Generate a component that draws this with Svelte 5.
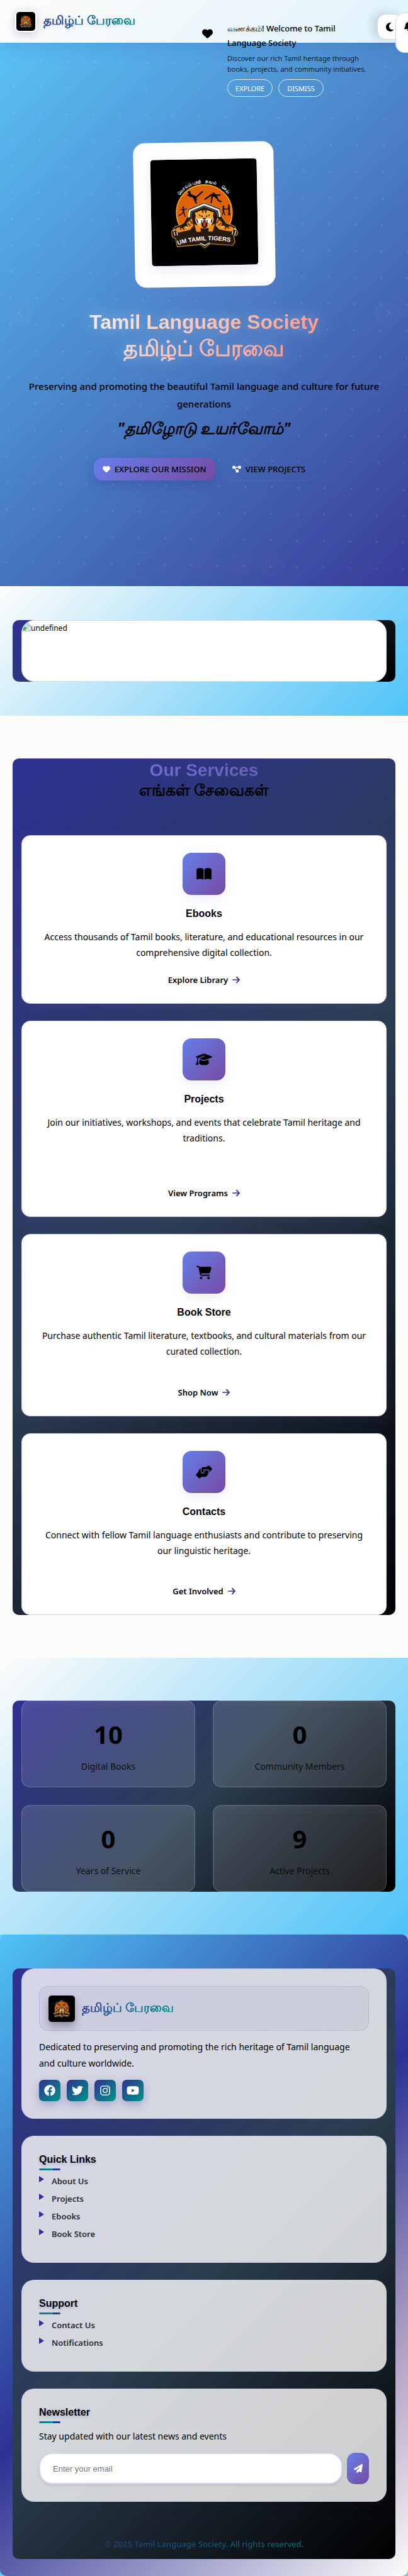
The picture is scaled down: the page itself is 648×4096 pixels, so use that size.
<script>
  const icons = {
    heart: { w: 512, d: 'M47.6 300.4L228.3 469.1c7.5 7 17.4 10.9 27.7 10.9s20.2-3.9 27.7-10.9L464.4 300.4c30.4-28.3 47.6-68 47.6-109.5v-5.8c0-69.9-50.5-129.5-119.4-141C347 36.5 300.6 51.4 268 84L256 96 244 84c-32.6-32.6-79-47.5-124.6-39.9C50.5 55.6 0 115.2 0 185.1v5.8c0 41.5 17.2 81.2 47.6 109.5z' },
    diagram: { w: 576, d: 'M0 80C0 53.5 21.5 32 48 32h96c26.5 0 48 21.5 48 48V96H384V80c0-26.5 21.5-48 48-48h96c26.5 0 48 21.5 48 48v96c0 26.5-21.5 48-48 48H432c-26.5 0-48-21.5-48-48V160H192v16c0 1.7-.1 3.4-.3 5L272 288h96c26.5 0 48 21.5 48 48v96c0 26.5-21.5 48-48 48H272c-26.5 0-48-21.5-48-48V336c0-1.7 .1-3.4 .3-5L144 224H48c-26.5 0-48-21.5-48-48V80z' },
    book: { w: 576, d: 'M249.6 471.5c10.8 3.8 22.4-4.1 22.4-15.5V78.6c0-4.2-1.6-8.4-5-11C247.4 52 202.4 32 144 32C93.5 32 46.3 45.3 18.1 56.1C6.8 60.5 0 71.7 0 83.8V454.1c0 11.9 12.8 20.2 24.1 16.5C55.6 460.1 105.5 448 144 448c33.9 0 79 14 105.6 23.5zm76.8 0C353 462 398.1 448 432 448c38.5 0 88.4 12.1 119.9 22.6c11.3 3.8 24.1-4.6 24.1-16.5V83.8c0-12.1-6.8-23.3-18.1-27.6C529.7 45.3 482.5 32 432 32c-58.4 0-103.4 20-123 35.6c-3.3 2.6-5 6.8-5 11V456c0 11.4 11.7 19.3 22.4 15.5z' },
    cap: { w: 640, d: 'M320 32c-8.1 0-16.1 1.4-23.7 4.1L15.8 137.4C6.3 140.9 0 149.9 0 160s6.3 19.1 15.8 22.6l57.9 20.9C57.3 229.3 48 259.8 48 291.9v28.1c0 28.4-10.8 57.7-22.3 80.8c-6.5 13-13.9 25.8-22.5 37.6C0 442.7-.9 448.3 .9 453.4s6 8.9 11.2 10.2l64 16c4.2 1.1 8.7 .3 12.4-2s6.3-6.1 7.1-10.4c8.6-42.8 4.3-81.2-2.1-108.7C90.3 344.3 86 329.8 80 316.5V291.9c0-30.2 10.2-58.7 27.9-81.5c12.9-15.5 29.6-28 49.2-35.7l157-61.7c8.2-3.2 17.5 .8 20.7 9s-.8 17.5-9 20.7l-157 61.7c-12.4 4.9-23.3 12.4-32.2 21.6l159.6 57.6c7.6 2.7 15.6 4.1 23.7 4.1s16.1-1.4 23.7-4.1L624.2 182.6c9.5-3.4 15.8-12.5 15.8-22.6s-6.3-19.1-15.8-22.6L343.7 36.1C336.1 33.4 328.1 32 320 32zM128 408c0 35.3 86 72 192 72s192-36.7 192-72L496.7 262.6 354.5 314c-11.1 4-22.8 6-34.5 6s-23.5-2-34.5-6L143.3 262.6 128 408z' },
    cart: { w: 576, d: 'M0 24C0 10.7 10.7 0 24 0H69.5c22 0 41.5 12.8 50.6 32h411c26.3 0 45.5 25 38.6 50.4l-41 152.3c-8.5 31.4-37 53.3-69.5 53.3H170.7l5.4 28.5c2.2 11.3 12.1 19.5 23.6 19.5H488c13.3 0 24 10.7 24 24s-10.7 24-24 24H199.7c-34.6 0-64.3-24.6-70.7-58.5L77.4 54.5c-.7-3.8-4-6.5-7.9-6.5H24C10.7 48 0 37.3 0 24zM128 464a48 48 0 1 1 96 0 48 48 0 1 1 -96 0zm336-48a48 48 0 1 1 0 96 48 48 0 1 1 0-96z' },
    hands: { w: 640, d: 'M544 248v3.3l69.7-69.7c21.9-21.9 21.9-57.3 0-79.2L535.6 24.4c-21.9-21.9-57.3-21.9-79.2 0L416.3 64.5c-2.7-.3-5.5-.5-8.3-.5H296c-37.1 0-67.6 28-71.6 64H224V248c0 22.1 17.9 40 40 40s40-17.9 40-40V160h160c44.2 0 80 35.8 80 80v8zM336 192v56c0 39.8-32.2 72-72 72s-72-32.2-72-72V129.4c-35.9 6.2-65.8 32.3-76 68.2L99.5 255.2 26.3 328.4c-21.9 21.9-21.9 57.3 0 79.2l78.1 78.1c21.9 21.9 57.3 21.9 79.2 0l37.7-37.7c.9 0 1.8 .1 2.7 .1H384c26.5 0 48-21.5 48-48c0-5.6-1-11-2.7-16H432c26.5 0 48-21.5 48-48c0-12.8-5-24.4-13.2-33c25.7-5 45.1-27.6 45.2-54.8v-.4c-.1-30.8-25.1-55.8-56-55.8l-120 0z' },
    arrow: { w: 448, d: 'M438.6 278.6c12.5-12.5 12.5-32.8 0-45.3l-160-160c-12.5-12.5-32.8-12.5-45.3 0s-12.5 32.8 0 45.3L338.8 224 32 224c-17.7 0-32 14.3-32 32s14.3 32 32 32l306.7 0L233.4 393.4c-12.5 12.5-12.5 32.8 0 45.3s32.8 12.5 45.3 0l160-160z' },
    moon: { w: 384, d: 'M223.5 32C100 32 0 132.3 0 256S100 480 223.5 480c60.6 0 115.5-24.2 155.8-63.4c5-4.9 6.3-12.5 3.1-18.7s-10.1-9.7-17-8.5c-9.8 1.7-19.8 2.6-30.1 2.6c-96.9 0-175.5-78.8-175.5-176c0-65.8 36-123.1 89.3-153.3c6.1-3.5 9.2-10.5 7.7-17.3s-7.3-11.9-14.3-12.5c-6.3-.5-12.6-.8-19-.8z' },
    bell: { w: 448, d: 'M224 0c-17.7 0-32 14.3-32 32V51.2C119 66 64 130.6 64 208v18.8c0 47-17.3 92.4-48.5 127.6l-7.4 8.3c-8.4 9.4-10.4 22.9-5.3 34.4S19.4 416 32 416H416c12.6 0 24-7.4 29.2-18.9s3.1-25-5.3-34.4l-7.4-8.3C401.3 319.2 384 273.9 384 226.8V208c0-77.4-55-142-128-156.8V32c0-17.7-14.3-32-32-32zm45.3 493.3c12-12 18.7-28.3 18.7-45.3H224 160c0 17 6.7 33.3 18.7 45.3s28.3 18.7 45.3 18.7s33.3-6.7 45.3-18.7z' },
    facebook: { w: 512, d: 'M504 256C504 119 393 8 256 8S8 119 8 256c0 123.78 90.69 226.38 209.25 245V327.69h-63V256h63v-54.64c0-62.15 37-96.48 93.67-96.48 27.14 0 55.52 4.84 55.52 4.84v61h-31.28c-30.8 0-40.41 19.12-40.41 38.73V256h68.78l-11 71.69h-57.78V501C413.31 482.38 504 379.78 504 256z' },
    twitter: { w: 512, d: 'M459.37 151.716c.325 4.548.325 9.097.325 13.645 0 138.72-105.583 298.558-298.558 298.558-59.452 0-114.68-17.219-161.137-47.106 8.447.974 16.568 1.299 25.34 1.299 49.055 0 94.213-16.568 130.274-44.832-46.132-.975-84.792-31.188-98.112-72.772 6.498.974 12.995 1.624 19.818 1.624 9.421 0 18.843-1.3 27.614-3.573-48.081-9.747-84.143-51.98-84.143-102.985v-1.299c13.969 7.797 30.214 12.67 47.431 13.319-28.264-18.843-46.781-51.005-46.781-87.391 0-19.492 5.197-37.36 14.294-52.954 51.655 63.675 129.3 105.258 216.365 109.807-1.624-7.797-2.599-15.918-2.599-24.04 0-57.828 46.782-104.934 104.934-104.934 30.213 0 57.502 12.67 76.67 33.137 23.715-4.548 46.456-13.32 66.599-25.34-7.798 24.366-24.366 44.833-46.132 57.827 21.117-2.273 41.584-8.122 60.426-16.243-14.292 20.791-32.161 39.308-52.628 54.253z' },
    instagram: { w: 512, d: 'M160 32h192a128 128 0 0 1 128 128v192a128 128 0 0 1-128 128H160A128 128 0 0 1 32 352V160A128 128 0 0 1 160 32zm0 42a86 86 0 0 0-86 86v192a86 86 0 0 0 86 86h192a86 86 0 0 0 86-86V160a86 86 0 0 0-86-86zm96 67a115 115 0 1 1 0 230 115 115 0 0 1 0-230zm0 40a75 75 0 1 0 0 150 75 75 0 0 0 0-150zM376 109a27 27 0 1 1 0 54 27 27 0 0 1 0-54z' },
    youtube: { w: 576, d: 'M549.655 124.083c-6.281-23.65-24.787-42.276-48.284-48.597C458.781 64 288 64 288 64S117.22 64 74.629 75.486c-23.497 6.322-42.003 24.947-48.284 48.597-11.412 42.867-11.412 132.305-11.412 132.305s0 89.438 11.412 132.305c6.281 23.65 24.787 41.5 48.284 47.821C117.22 448 288 448 288 448s170.78 0 213.371-11.486c23.497-6.321 42.003-24.171 48.284-47.821 11.412-42.867 11.412-132.305 11.412-132.305s0-89.438-11.412-132.305zm-317.51 213.508V175.185l142.739 81.205-142.739 81.201z' },
    plane: { w: 512, d: 'M498.1 5.6c10.1 7 15.4 19.1 13.5 31.2l-64 416c-1.5 9.7-7.4 18.2-16 23s-18.9 5.4-28 1.6L284 427.7l-68.5 74.1c-8.9 9.7-22.9 12.9-35.2 8.1S160 493.2 160 480V396.4c0-4 1.5-7.8 4.2-10.7L331.8 202.8c5.8-6.3 5.6-16-.4-22s-15.7-6.4-22-.7L106 360.8 17.7 316.6C7.1 311.3 .3 300.7 0 288.9s5.9-22.8 16.1-28.7l448-256c10.7-6.1 23.9-5.5 34 1.4z' }
  };

  const services = [
    { icon: 'book', title: 'Ebooks', text: 'Access thousands of Tamil books, literature, and educational resources in our comprehensive digital collection.', link: 'Explore Library' },
    { icon: 'cap', title: 'Projects', text: 'Join our initiatives, workshops, and events that celebrate Tamil heritage and traditions.', link: 'View Programs' },
    { icon: 'cart', title: 'Book Store', text: 'Purchase authentic Tamil literature, textbooks, and cultural materials from our curated collection.', link: 'Shop Now' },
    { icon: 'hands', title: 'Contacts', text: 'Connect with fellow Tamil language enthusiasts and contribute to preserving our linguistic heritage.', link: 'Get Involved' }
  ];

  const stats = [
    { value: 10, label: 'Digital Books' },
    { value: 0, label: 'Community Members' },
    { value: 0, label: 'Years of Service' },
    { value: 9, label: 'Active Projects' }
  ];

  const linkGroups = [
    { title: 'Quick Links', links: ['About Us', 'Projects', 'Ebooks', 'Book Store'] },
    { title: 'Support', links: ['Contact Us', 'Notifications'] }
  ];

  const socials = ['facebook', 'twitter', 'instagram', 'youtube'];
  const slides = [1, 2, 3, 4, 5];
  let email = $state('');
</script>

{#snippet icon(name, size)}
  <svg class="icon" width={Math.round((size * icons[name].w) / 512)} height={size} viewBox="0 0 {icons[name].w} 512" aria-hidden="true">
    <path d={icons[name].d} fill="currentColor" fill-rule="evenodd" />
  </svg>
{/snippet}

{#snippet emblem(id)}
  <svg class="emblem" viewBox="-78 -76 600 600" role="img" aria-label="UM Tamil Tigers">
    <rect x="-78" y="-76" width="600" height="600" fill="#000" />
    <circle cx="222" cy="226" r="157" fill="#dc620c" stroke="#f3a51d" stroke-width="6" />
    <path id="{id}-arc" d="M64 167.5A168 168 0 0 1 380 167.5" fill="none" />
    <g fill="#fff" font-family="'Noto Sans', sans-serif" font-weight="700" font-size="24" text-anchor="middle">
      <text><textPath href="#{id}-arc" startOffset="29%">மொய்ம்புறத்</textPath></text>
      <text><textPath href="#{id}-arc" startOffset="60%">தவம்</textPath></text>
      <text><textPath href="#{id}-arc" startOffset="81%">செய்</textPath></text>
    </g>
    <g fill="none" stroke="#0c0704" stroke-linecap="round" stroke-linejoin="round">
      <path stroke-width="12" d="M144 122L160 134L176 152" />
      <path stroke-width="8" d="M144 120L132 126L150 134M166 146L178 172M172 144L190 128L213 108M158 130L176 136" />
      <path stroke-width="13" d="M262 128L282 132L294 142" />
      <path stroke-width="8" d="M258 130L228 150M268 134L262 170M294 144L304 160L318 166M272 126L292 128L312 128" />
      <path stroke-width="8" d="M104 204L106 222" />
      <path stroke-width="5" d="M90 206L122 204M106 222L92 232L78 242M106 224L114 246M330 206L330 220M330 204L346 210L356 204M330 220L324 240M330 220L338 240M362 218L358 242M362 218L367 242" />
      <path stroke-width="9" d="M330 202V216M362 196V216" />
    </g>
    <g fill="#0c0704"><circle cx="139" cy="110" r="8" /><circle cx="276" cy="122" r="8" /><circle cx="104" cy="195" r="5" /><circle cx="331" cy="193" r="5" /><circle cx="361" cy="188" r="5" /></g>
    <path fill="#26190f" stroke="#d1901f" stroke-width="4" stroke-linejoin="round" d="M58 300L78 296L104 282L120 256L132 236L130 204L222 168L314 204L314 236L328 262L346 288L378 300L392 306L410 344L402 358L386 356L392 396L378 414L250 402L222 426L196 406L66 416L58 370L38 358L36 330Z" />
    <path fill="none" stroke="#e9e9e9" stroke-width="10" d="M134 252L141 213L222 180L303 213L310 252" />
    <path fill="none" stroke="#8b8b8b" stroke-width="3" d="M146 252L152 220L222 192L292 220L298 252" />
    <g fill="#f08a1c">
      <path d="M150 256L122 284L128 306L112 300L98 316L84 304L64 310L58 326L74 336L104 330L140 322L160 300Z" />
      <path d="M294 256L322 284L316 306L332 300L346 316L360 304L380 310L388 326L370 336L340 330L304 322L284 300Z" />
      <path d="M164 290L176 334H200V306ZM280 290L268 334H244V306Z" />
    </g>
    <g fill="none" stroke="#2a170a" stroke-width="5"><path d="M140 268L154 288M128 286L144 300M304 268L290 288M316 286L300 300M84 306L88 320M104 312L106 324M360 306L356 320M340 312L338 324" /></g>
    <g fill="none" stroke="#eee" stroke-width="5" stroke-linecap="round"><path d="M50 334L54 352M66 334L68 350M56 318L46 326M398 334L392 352M380 334L378 350M388 318L398 326M118 304L128 312M326 304L316 312" /></g>
    <path fill="#f6a329" d="M168 226L182 222L200 214H244L262 222L276 226L270 244L274 270L262 296L248 310L222 318L196 310L182 296L170 270L174 244Z" />
    <path fill="#ececec" d="M172 250L186 262L206 258L222 268L238 258L258 262L272 250L270 276L258 296L250 284H194L186 296L174 276Z" />
    <path fill="#24140a" d="M190 236L214 244L212 252L194 246ZM254 236L230 244L232 252L250 246ZM208 216L214 232L219 216ZM236 216L230 232L225 216ZM176 254L184 270L188 292L178 276ZM268 254L260 270L256 292L266 276ZM204 270H240L238 304L222 318L206 304Z" />
    <path fill="#c8400e" d="M214 280H230L228 300L222 308L216 300Z" />
    <path fill="#fff" d="M207 271L212 284L217 272ZM237 271L232 284L227 272ZM194 240L208 244L204 248ZM250 240L236 244L240 248Z" />
    <path fill="#24140a" d="M212 256H232L222 268Z" />
    <path id="{id}-base" d="M70 406Q222 364 380 397" fill="none" />
    <text fill="#fff" font-family="'Liberation Sans', sans-serif" font-weight="700" font-size="34"><textPath href="#{id}-base">UM TAMIL TIGERS</textPath></text>
    <path fill="#e4e4e4" d="M194 398L222 412L250 397L222 410Z" stroke="#e4e4e4" stroke-width="4" />
  </svg>
{/snippet}

<header class="topbar">
  <a class="brand" href="#home">
    <span class="brand-logo">{@render emblem('top')}</span>
    <span class="brand-name shaded">தமிழ்ப் பேரவை</span>
  </a>
  <button class="round theme" aria-label="Toggle theme">{@render icon('moon', 16)}</button>
  <button class="round alerts" aria-label="Notifications">{@render icon('bell', 15)}</button>
</header>

<aside class="toast">
  <span class="toast-icon">{@render icon('heart', 17)}</span>
  <div>
    <strong class="toast-title">வணக்கம்! Welcome to Tamil Language Society</strong>
    <p class="toast-text">Discover our rich Tamil heritage through books, projects, and community initiatives.</p>
    <div class="toast-actions">
      <button>EXPLORE</button>
      <button>DISMISS</button>
    </div>
  </div>
</aside>

<main>
  <section class="hero" id="home">
    <div class="hero-card">{@render emblem('hero')}</div>
    <h1>Tamil Language Society <span>தமிழ்ப் பேரவை</span></h1>
    <p class="hero-lead">Preserving and promoting the beautiful Tamil language and culture for future generations</p>
    <p class="hero-motto">"தமிழோடு உயர்வோம்"</p>
    <div class="hero-actions">
      <a class="cta primary" href="#mission"><i>{@render icon('heart', 12)}</i>EXPLORE OUR MISSION</a>
      <a class="cta" href="#projects"><i>{@render icon('diagram', 12)}</i>VIEW PROJECTS</a>
    </div>
    <button class="slide-nav prev" aria-label="Previous slide"><svg width="8" height="14" viewBox="0 0 8 14"><path d="M7 1L1 7l6 6" /></svg></button>
    <button class="slide-nav next" aria-label="Next slide"><svg width="8" height="14" viewBox="0 0 8 14"><path d="M1 1l6 6-6 6" /></svg></button>
    <div class="dots">
      {#each slides as n}<button class:active={n === 1} aria-label="Slide {n}"></button>{/each}
    </div>
  </section>

  <section class="band banner">
    <div class="panel">
      <div class="banner-card">
        <svg width="14" height="14" viewBox="0 0 16 16" aria-hidden="true">
          <path d="M1 1h10l4 4v10H1z" fill="#c6d9f5" stroke="#9a9a9a" />
          <path d="M11 1v4h4" fill="#fff" stroke="#9a9a9a" />
          <path d="M2 14V10l3-3 4 3-4 4z" fill="#4faf3e" />
          <path d="M8 15L15 8v3l-4 4z" fill="#fff" />
        </svg><span>undefined</span>
      </div>
    </div>
  </section>

  <section class="band services">
    <div class="panel">
      <div class="section-head">
        <h2>Our Services</h2>
        <p>எங்கள் சேவைகள்</p>
      </div>
      <div class="service-grid">
        {#each services as s}
          <article class="service">
            <div class="service-icon">{@render icon(s.icon, 21)}</div>
            <h3>{s.title}</h3>
            <p>{s.text}</p>
            <a href="#services">{s.link} {@render icon('arrow', 14)}</a>
          </article>
        {/each}
      </div>
    </div>
  </section>

  <section class="band stats">
    <div class="panel stat-grid">
      {#each stats as s}
        <div class="stat"><strong>{s.value}</strong><span>{s.label}</span></div>
      {/each}
    </div>
  </section>
</main>

<footer>
  <div class="panel">
    <section class="foot-card about">
      <div class="foot-brand">
        <span class="foot-logo">{@render emblem('foot')}</span>
        <span class="brand-name">தமிழ்ப் பேரவை</span>
      </div>
      <p>Dedicated to preserving and promoting the rich heritage of Tamil language and culture worldwide.</p>
      <div class="socials">
        {#each socials as s}<a href="#{s}" aria-label={s}>{@render icon(s, 18)}</a>{/each}
      </div>
    </section>
    {#each linkGroups as g}
      <nav class="foot-card">
        <h4>{g.title}</h4>
        <ul>
          {#each g.links as l}<li><a href="#top">{l}</a></li>{/each}
        </ul>
      </nav>
    {/each}
    <section class="foot-card newsletter">
      <h4>Newsletter</h4>
      <p>Stay updated with our latest news and events</p>
      <form onsubmit={(e) => e.preventDefault()}>
        <input type="email" placeholder="Enter your email" aria-label="Email address" bind:value={email} />
        <button aria-label="Subscribe">{@render icon('plane', 14)}</button>
      </form>
    </section>
    <div class="legal"><span>© 2025 Tamil Language Society. All rights reserved.</span></div>
  </div>
</footer>

<style>
  :global(body) {
    background: #6ccaf8;
    overflow-x: hidden;
    color: #000;
    font-family: 'Noto Sans', sans-serif;
    font-size: 14px;
  }
  :global(#app) { position: relative; overflow: hidden; }
  *, *::before, *::after { box-sizing: border-box; }
  h1, h2, h3, h4, p, ul { margin: 0; padding: 0; }
  a { color: inherit; text-decoration: none; }
  button { font: inherit; cursor: pointer; padding: 0; }
  .icon, .emblem { display: block; flex: none; }
  .emblem { width: 100%; height: 100%; }

  .topbar {
    position: absolute;
    inset: 0 0 auto 0;
    z-index: 2;
    height: 68px;
    padding: 0 24px;
    display: flex;
    align-items: center;
    background: linear-gradient(135deg, #fdfcfa, #dff2fc);
    box-shadow: 0 7px 27px rgba(46, 49, 146, 0.15);
  }
  .brand { display: flex; align-items: center; gap: 11px; }
  .brand-logo {
    width: 34px;
    height: 34px;
    border: 2px solid #fff;
    border-radius: 7px;
    overflow: hidden;
    box-shadow: 0 3px 13px rgba(46, 49, 146, 0.25);
  }
  .brand-name {
    padding-bottom: 4px;
    font-size: 20px;
    font-weight: 700;
    line-height: 32px;
    background: linear-gradient(135deg, #2e3192, #009688);
    background-clip: text;
    color: transparent;
  }
  .shaded { filter: drop-shadow(0 2px 3px rgba(46, 49, 146, 0.15)); }
  .round {
    position: absolute;
    background: #fff;
    border: 1px solid #d5d6ea;
    color: #000;
  }
  .theme {
    top: 22px;
    right: 8px;
    width: 41px;
    height: 41px;
    padding-left: 13px;
    border-radius: 14px;
    box-shadow: -7px -2px 14px rgba(60, 90, 110, 0.2);
  }
  .alerts {
    top: 20px;
    right: -22px;
    width: 42px;
    height: 64px;
    padding: 0 0 22px 13px;
    border-radius: 14px;
  }

  .toast {
    position: absolute;
    z-index: 3;
    top: 34px;
    left: 321px;
    right: 60px;
    display: flex;
    gap: 23px;
  }
  .toast-icon { padding-top: 11px; }
  .toast-title { display: block; max-width: 220px; font-size: 13px; font-weight: 500; line-height: 23px; }
  .toast-text { margin-top: 4px; max-width: 230px; font-size: 11px; line-height: 17px; color: rgba(0, 0, 0, 0.85); }
  .toast-actions { display: flex; gap: 9px; margin-top: 8px; }
  .toast-actions button {
    width: 72px;
    height: 28px;
    border: 1px solid rgba(255, 255, 255, 0.8);
    border-radius: 14px;
    background: none;
    color: #fff;
    font-size: 11px;
  }

  .hero {
    position: relative;
    overflow: hidden;
    min-height: 932px;
    padding: 226px 27px 0;
    display: flex;
    flex-direction: column;
    align-items: center;
    text-align: center;
    background:
      linear-gradient(rgba(255, 255, 255, 0.07), rgba(255, 255, 255, 0.05)),
      linear-gradient(135deg, #4fc3f7, #2e3192);
  }
  .hero::before {
    content: '';
    position: absolute;
    inset: -20px;
    background: radial-gradient(circle, rgba(255, 255, 255, 0.12) 1px, transparent 2px) 16px 16px / 42px 42px;
    transform: rotate(1deg);
  }
  .hero > * { position: relative; }
  .hero-card {
    width: 223px;
    height: 230px;
    padding: 27px;
    border-radius: 18px;
    background: #fff;
    box-shadow: 0 14px 40px rgba(120, 130, 210, 0.3);
    transform: rotate(-1deg);
  }
  .hero-card .emblem { height: 169px; border-radius: 5px; box-shadow: 0 7px 20px rgba(46, 49, 146, 0.1); }
  h1 {
    margin-top: 36px;
    font: 700 32px/41px 'Liberation Sans', 'Noto Sans', sans-serif;
    background: linear-gradient(135deg, #f6e7e3 10%, #ff9a8b 90%);
    background-clip: text;
    color: transparent;
    filter: drop-shadow(0 0 13px rgba(255, 255, 255, 0.4));
  }
  h1 span { display: block; font-size: 35px; }
  .hero-lead { margin-top: 26px; font-size: 15px; font-weight: 500; line-height: 28px; }
  .hero-motto { margin-top: 6px; font-size: 25px; font-weight: 700; font-style: italic; line-height: 36px; }
  .hero-actions { display: flex; gap: 13px; margin-top: 30px; }
  .cta {
    display: flex;
    align-items: center;
    gap: 7px;
    height: 36px;
    padding: 0 14px;
    border-radius: 14px;
    font-size: 13px;
    font-weight: 500;
    box-shadow: 0 1px 1px rgba(255, 255, 255, 0.06);
  }
  .cta i { color: #fff; }
  .primary {
    background: linear-gradient(135deg, #667eea, #764ba2);
    box-shadow: 0 7px 20px rgba(46, 49, 146, 0.3);
  }
  .hero .slide-nav {
    position: absolute;
    top: 478px;
    width: 42px;
    height: 42px;
    border: 0;
    border-radius: 50%;
    background: rgba(255, 255, 255, 0.02);
  }
  .slide-nav path { fill: none; stroke: rgba(255, 255, 255, 0.07); stroke-width: 2; }
  .hero .prev { left: 11px; }
  .hero .next { right: 11px; }
  .dots { display: flex; align-items: center; gap: 9px; margin: auto 0 13px; }
  .dots button {
    width: 43px;
    height: 34px;
    border: 0;
    border-radius: 17px;
    background: rgba(120, 90, 180, 0.1);
  }
  .dots .active {
    width: 52px;
    height: 41px;
    border: 2px solid rgba(130, 140, 220, 0.08);
    border-radius: 20px;
    background: none;
    margin-right: -5px;
  }

  .band { padding: 68px 20px; }
  .banner { padding: 54px 20px; }
  .banner, .stats { background: linear-gradient(135deg, #fdfcfa, #4fc3f7); }
  .services { background: #fcfcfa; }
  .panel {
    padding: 0 14px;
    border-radius: 10px;
    overflow: hidden;
    background: linear-gradient(135deg, #2e3192, #2c3e50 50%, #000);
  }
  .banner-card {
    height: 98px;
    padding: 3px 0 0;
    display: flex;
    align-items: flex-start;
    border: 1px solid #d5d6ea;
    border-radius: 20px;
    background: #fff;
    overflow: hidden;
    font-size: 12px;
    line-height: 18px;
  }

  .section-head { height: 122px; text-align: center; }
  h2 {
    font: 700 28px/37px 'Liberation Sans', sans-serif;
    background: linear-gradient(135deg, #667eea, #764ba2);
    background-clip: text;
    color: transparent;
  }
  .section-head p { font-size: 25px; font-weight: 700; line-height: 24px; }
  .service-grid {
    display: grid;
    gap: 27px;
    grid-template-rows: minmax(268px, auto) minmax(312px, auto) minmax(290px, auto) minmax(289px, auto);
  }
  .service {
    display: flex;
    flex-direction: column;
    align-items: center;
    padding: 27px;
    border: 1px solid #d5d6ea;
    border-radius: 14px;
    background: #fff;
    text-align: center;
    box-shadow: 0 7px 27px rgba(102, 80, 180, 0.15);
  }
  .service-icon {
    width: 68px;
    height: 67px;
    display: grid;
    place-items: center;
    border-radius: 14px;
    background: linear-gradient(135deg, #667eea, #764ba2);
    box-shadow: 0 7px 20px rgba(46, 49, 146, 0.08);
  }
  h3 { margin-top: 20px; font: 700 16px/20px 'Liberation Sans', sans-serif; }
  .service p { margin-top: 14px; padding: 0 4px; line-height: 25px; }
  .service a {
    display: flex;
    align-items: center;
    gap: 7px;
    margin-top: auto;
    font-size: 13px;
    font-weight: 600;
    line-height: 20px;
  }
  .service a :global(.icon) { color: #2e3192; }

  .stat-grid { display: grid; grid-template-columns: 1fr 1fr; gap: 28px; }
  .stat {
    height: 138px;
    padding-top: 26px;
    display: flex;
    flex-direction: column;
    align-items: center;
    border: 1px solid rgba(255, 255, 255, 0.2);
    border-radius: 14px;
    background: rgba(255, 255, 255, 0.12);
    box-shadow: inset 0 8px 16px rgba(255, 255, 255, 0.03);
  }
  .stat strong { font-size: 40px; font-weight: 700; line-height: 54px; }
  .stat span { margin-top: 12px; font-size: 14px; line-height: 24px; color: rgba(0, 0, 0, 0.85); }

  footer {
    padding: 54px 20px 27px;
    border-radius: 10px;
    background:
      radial-gradient(circle at 100% 66%, rgba(255, 160, 150, 0.16), transparent 40%),
      linear-gradient(135deg, #4fc3f7, #2e3192 50%, #fdfcfa);
  }
  footer .panel { display: grid; gap: 27px; }
  .foot-card {
    padding: 27px;
    border: 1px solid rgba(200, 200, 225, 0.7);
    border-radius: 20px;
    background: rgba(255, 255, 255, 0.8);
  }
  .foot-brand {
    display: flex;
    align-items: center;
    gap: 11px;
    height: 71px;
    padding: 0 14px;
    border: 1px solid rgba(46, 49, 146, 0.12);
    border-radius: 14px;
    background: rgba(46, 49, 146, 0.05);
  }
  .foot-logo {
    width: 42px;
    height: 42px;
    border-radius: 5px;
    overflow: hidden;
    box-shadow: 0 7px 14px rgba(0, 0, 0, 0.3);
  }
  .about p { margin-top: 13px; padding-right: 14px; line-height: 26px; }
  .socials { display: flex; gap: 10px; margin-top: 13px; }
  .socials a {
    width: 34px;
    height: 34px;
    display: grid;
    place-items: center;
    border-radius: 7px;
    background: linear-gradient(135deg, #2e3192, #009688);
    color: #fff;
    box-shadow: 0 5px 14px rgba(46, 49, 146, 0.3);
  }
  h4 {
    font: 700 16px/20px 'Liberation Sans', sans-serif;
    text-shadow: 0 2px 4px rgba(46, 49, 146, 0.25);
  }
  h4::after {
    content: '';
    display: block;
    width: 34px;
    height: 3px;
    margin-top: 4px;
    border-radius: 2px;
    background: linear-gradient(90deg, #1d6a8d, #009688 65%, #2e3192 66%, #2e4196);
  }
  ul { margin-top: 3px; list-style: none; }
  li {
    display: flex;
    align-items: center;
    gap: 12px;
    height: 28px;
    font-size: 13px;
    font-weight: 600;
    color: #2a2b33;
  }
  li::before {
    content: '';
    margin-top: -6px;
    border-left: 8px solid #2e3192;
    border-top: 5px solid transparent;
    border-bottom: 5px solid transparent;
  }
  nav.foot-card { padding-bottom: 31px; }
  .newsletter p { margin-top: 9px; line-height: 24px; }
  form { display: flex; gap: 7px; margin-top: 14px; }
  input {
    flex: 1;
    min-width: 0;
    height: 50px;
    padding: 0 20px;
    border: 2px solid #d5d6ec;
    border-radius: 21px;
    background: #fff;
    font: 13px 'Liberation Sans', sans-serif;
    box-shadow: 0 2px 4px rgba(0, 0, 0, 0.1);
  }
  input::placeholder { color: #757575; }
  form button {
    width: 35px;
    height: 50px;
    display: grid;
    place-items: center;
    border: 0;
    border-radius: 13px;
    background: linear-gradient(135deg, #667eea, #764ba2);
    color: #fff;
  }
  .legal {
    padding: 28px 0 12px;
    border-top: 1px solid rgba(46, 49, 146, 0.1);
    text-align: center;
    font-size: 13px;
    font-weight: 500;
    line-height: 23px;
  }
  .legal span {
    display: block;
    background: linear-gradient(135deg, #2e3192, #009688);
    background-clip: text;
    color: transparent;
    opacity: 0.8;
  }
</style>
